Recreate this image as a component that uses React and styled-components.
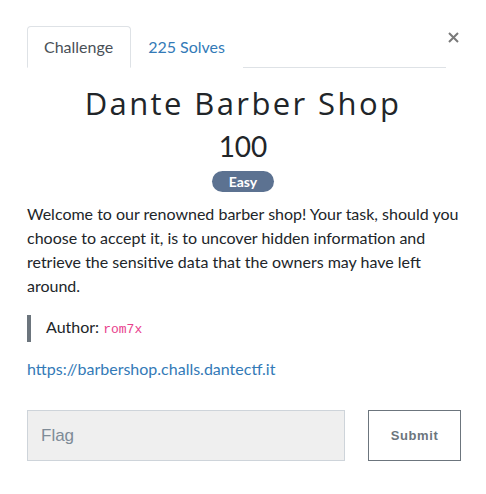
import React from "react";
import styled, { createGlobalStyle } from "styled-components";

const Global = createGlobalStyle`
  html, body { margin: 0; padding: 0; background: #fff; }
  body { font-family: Lato, "Noto Sans", sans-serif; color: #212529; }
  * { box-sizing: border-box; }
`;

const Modal = styled.div`
  width: 486px;
  height: 494px;
  padding: 26px 27px 0 27px;
  background: #fff;
`;

const HeaderRow = styled.div`
  display: flex;
  align-items: flex-start;
`;

const Tabs = styled.nav`
  flex: 1;
  display: flex;
  border-bottom: 1px solid #dee2e6;
`;

const Tab = styled.a`
  display: block;
  padding: 8px 17px 8px 16px;
  font-size: 16px;
  line-height: 24px;
  margin-bottom: -1px;
  border: 1px solid ${(p) => (p.$active ? "#dee2e6" : "transparent")};
  border-bottom-color: ${(p) => (p.$active ? "#fff" : "transparent")};
  border-radius: 4px 4px 0 0;
  color: ${(p) => (p.$active ? "#495057" : "#337ab7")};
  background: #fff;
  text-decoration: none;
`;

const Close = styled.button`
  width: 13px;
  margin: 6px 0 0 0;
  padding: 0;
  border: 0;
  background: none;
  display: flex;
  justify-content: flex-end;
  cursor: pointer;
`;

const Center = styled.div`
  display: flex;
  flex-direction: column;
  align-items: center;
  padding-top: 16px;
`;

const Title = styled.h3`
  margin: 0;
  font-family: "Open Sans", "Noto Sans", sans-serif;
  font-weight: 400;
  font-size: 31px;
  line-height: 38px;
  letter-spacing: 2.4px;
  color: #212529;
`;

const Points = styled.h4`
  margin: 6px 0 0 0;
  font-weight: 400;
  font-size: 28px;
  line-height: 36px;
  color: #212529;
`;

const Badge = styled.span`
  display: inline-block;
  margin-top: 7px;
  padding: 0 17px;
  height: 21px;
  line-height: 21px;
  border-radius: 11px;
  background: #5c7291;
  color: #fff;
  font-weight: 700;
  font-size: 14px;
`;

const Description = styled.p`
  margin: 10px 0 0 0;
  font-size: 16px;
  line-height: 24px;
  color: #212529;
`;

const Quote = styled.blockquote`
  margin: 17px 0 0 0;
  padding: 0 0 0 15px;
  border-left: 4px solid #6c757d;
  font-size: 16px;
  line-height: 24px;
`;

const Code = styled.code`
  font-family: "Liberation Mono", "DejaVu Sans Mono", monospace;
  font-size: 13px;
  color: #e83e8c;
`;

const Link = styled.a`
  display: block;
  margin-top: 15px;
  font-size: 16px;
  line-height: 24px;
  color: #337ab7;
  text-decoration: none;
`;

const FlagRow = styled.form`
  display: grid;
  grid-template-columns: 318px 93px;
  justify-content: space-between;
  margin-top: 29px;
  width: 434px;
`;

const FlagInput = styled.input`
  height: 51px;
  padding: 0 13px;
  background: #efefef;
  border: 1px solid #ced4da;
  border-radius: 0;
  font-family: "Liberation Sans", Arial, sans-serif;
  font-size: 17px;
  color: #495057;
  outline: none;
  &::placeholder { color: #7e8b97; }
`;

const SubmitButton = styled.button`
  height: 51px;
  background: #fff;
  border: 1px solid #6c757d;
  border-radius: 0;
  font-family: "Liberation Sans", Arial, sans-serif;
  font-weight: 700;
  font-size: 13px;
  letter-spacing: 0.6px;
  color: #6c757d;
  cursor: pointer;
`;

export default function App() {
  return (
    <>
      <Global />
      <Modal>
        <HeaderRow>
          <Tabs>
            <Tab $active>Challenge</Tab>
            <Tab>225 Solves</Tab>
          </Tabs>
          <Close aria-label="Close">
            <svg width="11" height="11" viewBox="0 0 11 11">
              <path d="M1 1L10 10M10 1L1 10" stroke="#7a7a7a" strokeWidth="2" />
            </svg>
          </Close>
        </HeaderRow>
        <Center>
          <Title>Dante Barber Shop</Title>
          <Points>100</Points>
          <Badge>Easy</Badge>
        </Center>
        <Description>
          Welcome to our renowned barber shop! Your task, should you choose to accept it, is to
          uncover hidden information and retrieve the sensitive data that the owners may have left
          around.
        </Description>
        <Quote>
          Author: <Code>rom7x</Code>
        </Quote>
        <Link href="#">https://barbershop.challs.dantectf.it</Link>
        <FlagRow onSubmit={(e) => e.preventDefault()}>
          <FlagInput placeholder="Flag" />
          <SubmitButton type="submit">Submit</SubmitButton>
        </FlagRow>
      </Modal>
    </>
  );
}
